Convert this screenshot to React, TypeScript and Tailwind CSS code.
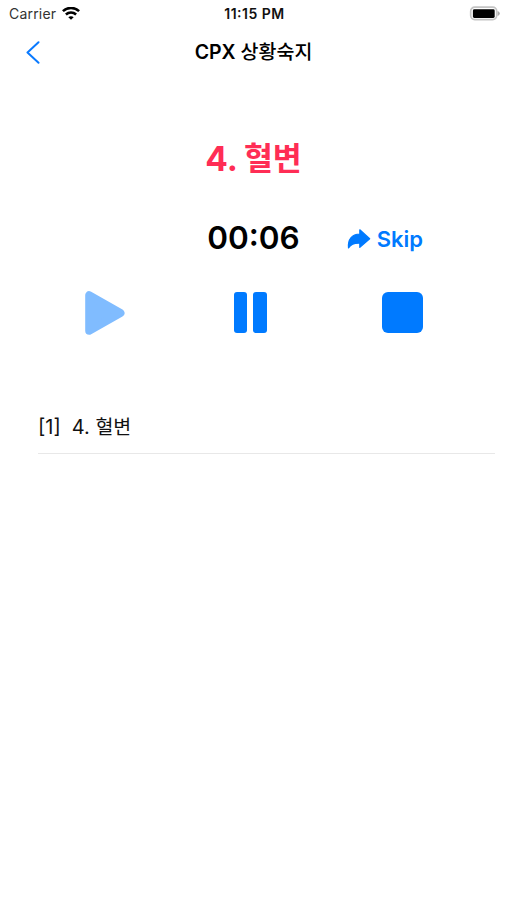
function StatusBar() {
  return (
    <div className="grid h-[27px] grid-cols-3 items-center pl-[9px] pr-[7px] text-[13.5px] leading-none">
      <div className="flex items-center gap-[6px]">
        <span className="mt-px text-[14px] tracking-[0.2px] text-[#333]">Carrier</span>
        <svg width="18" height="14" viewBox="0 0 18 14" fill="none" stroke="#000" strokeWidth="2.5">
          <path d="M0.9 4.2C5.4 -0.2 12.6 -0.2 17.1 4.2" />
          <path d="M3.9 7.5C6.8 4.7 11.2 4.7 14.1 7.5" />
          <path d="M6.3 10.2C7.8 8.8 10.2 8.8 11.7 10.2L9 12.8Z" fill="#000" stroke="none" />
        </svg>
      </div>
      <span className="mt-px whitespace-nowrap text-center text-[14px] font-semibold tracking-[0.5px] text-[#111] [font-feature-settings:'case']">11:15 PM</span>
      <svg className="justify-self-end" width="31" height="16" viewBox="0 0 31 16">
        <rect x="1.7" y="1.2" width="26" height="12.4" rx="4" fill="#fff" stroke="#c4c4c4" strokeWidth="1.7" />
        <rect x="3.9" y="3.3" width="21.8" height="8.6" rx="1.4" fill="#000" />
        <path d="M28.6 5.1Q30.8 5.8 30.8 7.5T28.6 9.9Z" fill="#aaa" />
      </svg>
    </div>
  );
}

function Header() {
  return (
    <header className="grid h-[51px] grid-cols-[1fr_auto_1fr] items-center px-[25px]">
      <button aria-label="Back" className="w-fit">
        <svg width="16" height="24" viewBox="0 0 16 24" fill="none" stroke="#0a7aff" strokeWidth="2" strokeLinecap="round" strokeLinejoin="round">
          <path d="M13.5 1.3L2.5 11.5L13.5 21.7" />
        </svg>
      </button>
      <h1 className="pt-px text-[19.5px] font-semibold leading-none">
        CPX <span className="font-medium">상황숙지</span>
      </h1>
    </header>
  );
}

export default function App() {
  return (
    <main className="h-[900px] w-[507px] overflow-hidden bg-white font-['Inter','Noto_Sans_CJK_KR',sans-serif] text-black">
      <StatusBar />
      <Header />
      <h2 className="mt-[61px] flex h-[40px] items-center justify-center gap-[6px] text-[33.5px] font-bold leading-none text-[#ff2d55]">
        <span className="mt-px">4.</span>
        <span className="text-[31.5px]">혈변</span>
      </h2>
      <div className="mt-[40px] grid h-[40px] grid-cols-[1fr_auto_1fr] items-center">
        <span className="col-start-2 pb-[2px] text-[31.5px] font-semibold leading-none [font-feature-settings:'case']">00:06</span>
        <button className="ml-[47px] flex items-center gap-[6px] text-[22px] font-semibold leading-none text-[#007aff]">
          <svg width="24" height="20" viewBox="0 0 24 20" fill="currentColor" stroke="currentColor" strokeWidth="1.2" strokeLinejoin="round">
            <path d="M12.8 0.8L22.7 9.7L12.8 18.4V14.2C8.2 13.9 4.2 15 1.5 18.9C0.6 10.5 5 5.2 12.8 5Z" />
          </svg>
          Skip
        </button>
      </div>
      <div className="mt-[28px] flex h-[50px] items-center justify-between pl-[84px] pr-[84px]">
        <svg className="mt-[2px]" width="42" height="46" viewBox="0 0 42 46" fill="#80bcff" stroke="#80bcff" strokeWidth="8" strokeLinejoin="round">
          <path d="M5.2 5.2V40.8L36.5 23Z" />
        </svg>
        <div className="mr-[8px] flex h-[41px] w-[33px] justify-between">
          <span className="w-[13.5px] rounded-[3px] bg-[#007aff]" />
          <span className="w-[13.5px] rounded-[3px] bg-[#007aff]" />
        </div>
        <span className="h-[41px] w-[41px] rounded-[6px] bg-[#007aff]" />
      </div>
      <ul className="ml-[38px] mr-[12px] mt-[63px]">
        <li className="flex h-[54px] items-center border-b border-[#e8e8e8] pt-px text-[20px] leading-none text-[#111]">
          <span className="mr-[11px]">[1]</span>
          <span>
            4. <span className="text-[19.5px]">혈변</span>
          </span>
        </li>
      </ul>
    </main>
  );
}
